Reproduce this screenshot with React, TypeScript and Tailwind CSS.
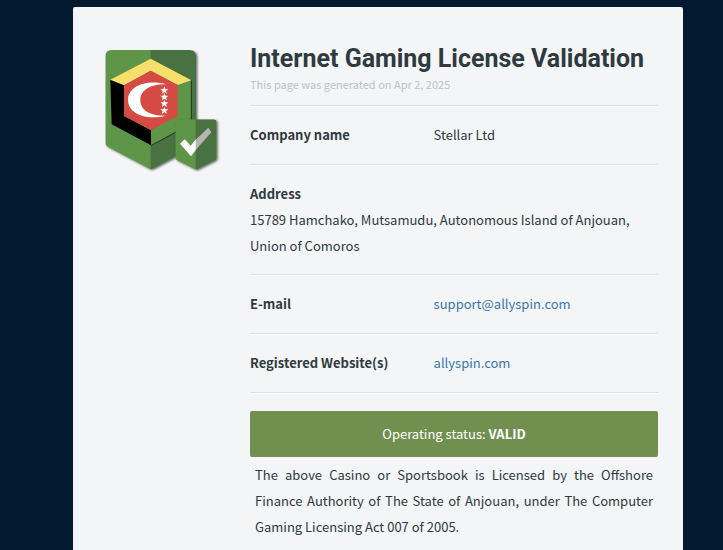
import type { ReactNode } from "react";

function LicenseLogo() {
  return (
    <svg className="block h-[124px] w-[118px]" viewBox="30 30 354 372" role="img" aria-label="Anjouan license seal">
      <defs>
        <filter id="shadow" x="-10%" y="-10%" width="125%" height="125%">
          <feDropShadow dx="4" dy="3" stdDeviation="3" floodColor="#000" floodOpacity="0.6" />
        </filter>
        <clipPath id="shield">
          <path d="M50 30H283Q303 30 303 50V308Q303 316 296 320L177 384Q168 390 159 384L38 320Q31 316 31 308V50Q31 30 50 30Z" />
        </clipPath>
        <clipPath id="badge">
          <path d="M252 238H355Q365 238 365 248V353Q365 358 360 361L308 387Q303 390 298 387L246 361Q241 358 241 353V248Q241 238 252 238Z" />
        </clipPath>
      </defs>

      <g filter="url(#shadow)">
        <g clipPath="url(#shield)">
          <path d="M30 30H168V392H30Z" fill="#5e9548" />
          <path d="M167 30H304V392H167Z" fill="#4a7243" />
        </g>
      </g>
      <path d="M47 120L167 57L288 120V252L167 316L50 252Z" fill="#5e9548" />
      <path d="M46 119L167 56L289 121L248 135L167 92L87 136Z" fill="#f8df6b" />
      <path d="M46 120L87 136V228L168 270V316L50 253Z" fill="#000" />
      <path d="M167 92L248 135V228L168 271L87 228V136Z" fill="#d54a43" />
      <path d="M289 121V251L168 317" fill="none" stroke="#1d3a19" strokeWidth="3" />
      <path d="M215 133C155 117 99 138 99 180C99 222 155 242 213 227C170 228 136 214 136 180C136 147 174 131 215 133Z" fill="#fff" />
      {[151, 171, 191, 212].map((y) => (
        <path
          key={y}
          transform={`translate(208 ${y})`}
          d="M0-12L3-4L12-4L5 2L8 10L0 5L-8 10L-5 2L-12-4L-3-4Z"
          fill="#fff"
        />
      ))}

      <g filter="url(#shadow)">
        <g clipPath="url(#badge)">
          <path d="M240 237H303V393H240Z" fill="#5e9548" />
          <path d="M302 237H366V393H302Z" fill="#4a7243" />
        </g>
      </g>
      <path d="M255 311L269 298L287 317L303 298V329L288 349Z" fill="#fff" />
      <path d="M302 299L340 263L349 277L302 330Z" fill="#b5b5b5" />
    </svg>
  );
}

function Row({ label, children }: { label: string; children: ReactNode }) {
  return (
    <div className="flex border-b border-[#dfe2e5] py-4 shadow-[0_1px_0_#fff]">
      <dt className="w-[45%] shrink-0 font-bold">{label}</dt>
      <dd className="min-w-0">{children}</dd>
    </div>
  );
}

export default function App() {
  return (
    <div className="flex min-h-screen flex-col bg-[#03192f] pt-[7px] pr-10 pl-[73px] font-['Noto_Sans_CJK_SC',sans-serif] text-[13px] leading-[26px] text-[#2f3a40]">
      <main className="flex grow items-start rounded-t-xs bg-[#f3f5f7] pr-[25px] pb-2 pl-8">
        <div className="w-[145px] shrink-0 pt-[43px]">
          <LicenseLogo />
        </div>

        <div className="min-w-0 grow">
          <header className="border-b border-[#dfe2e5] pt-9 pb-3 shadow-[0_1px_0_#fff]">
            <h1 className="font-['Roboto',sans-serif] text-[25px] leading-8 font-bold">Internet Gaming License Validation</h1>
            <p className="text-[11px] leading-[18px] text-[#bfc2c4]">This page was generated on Apr 2, 2025</p>
          </header>

          <dl>
            <Row label="Company name">Stellar Ltd</Row>
            <div className="border-b border-[#dfe2e5] pt-4 pb-[15px] shadow-[0_1px_0_#fff]">
              <dt className="font-bold">Address</dt>
              <dd>15789 Hamchako, Mutsamudu, Autonomous Island of Anjouan, Union of Comoros</dd>
            </div>
            <Row label="E-mail">
              <a className="text-[#3b76aa]" href="mailto:support@allyspin.com">support@allyspin.com</a>
            </Row>
            <Row label="Registered Website(s)">
              <a className="text-[#3b76aa]" href="https://allyspin.com">allyspin.com</a>
            </Row>
          </dl>

          <div className="mt-[18px] rounded-xs bg-[#718f4f] p-2.5 text-center text-white">
            Operating status: <strong>VALID</strong>
          </div>
          <p className="p-[5px] text-justify">
            The above Casino or Sportsbook is Licensed by the Offshore Finance Authority of The State of Anjouan, under The
            Computer Gaming Licensing Act 007 of 2005.
          </p>
        </div>
      </main>
    </div>
  );
}
